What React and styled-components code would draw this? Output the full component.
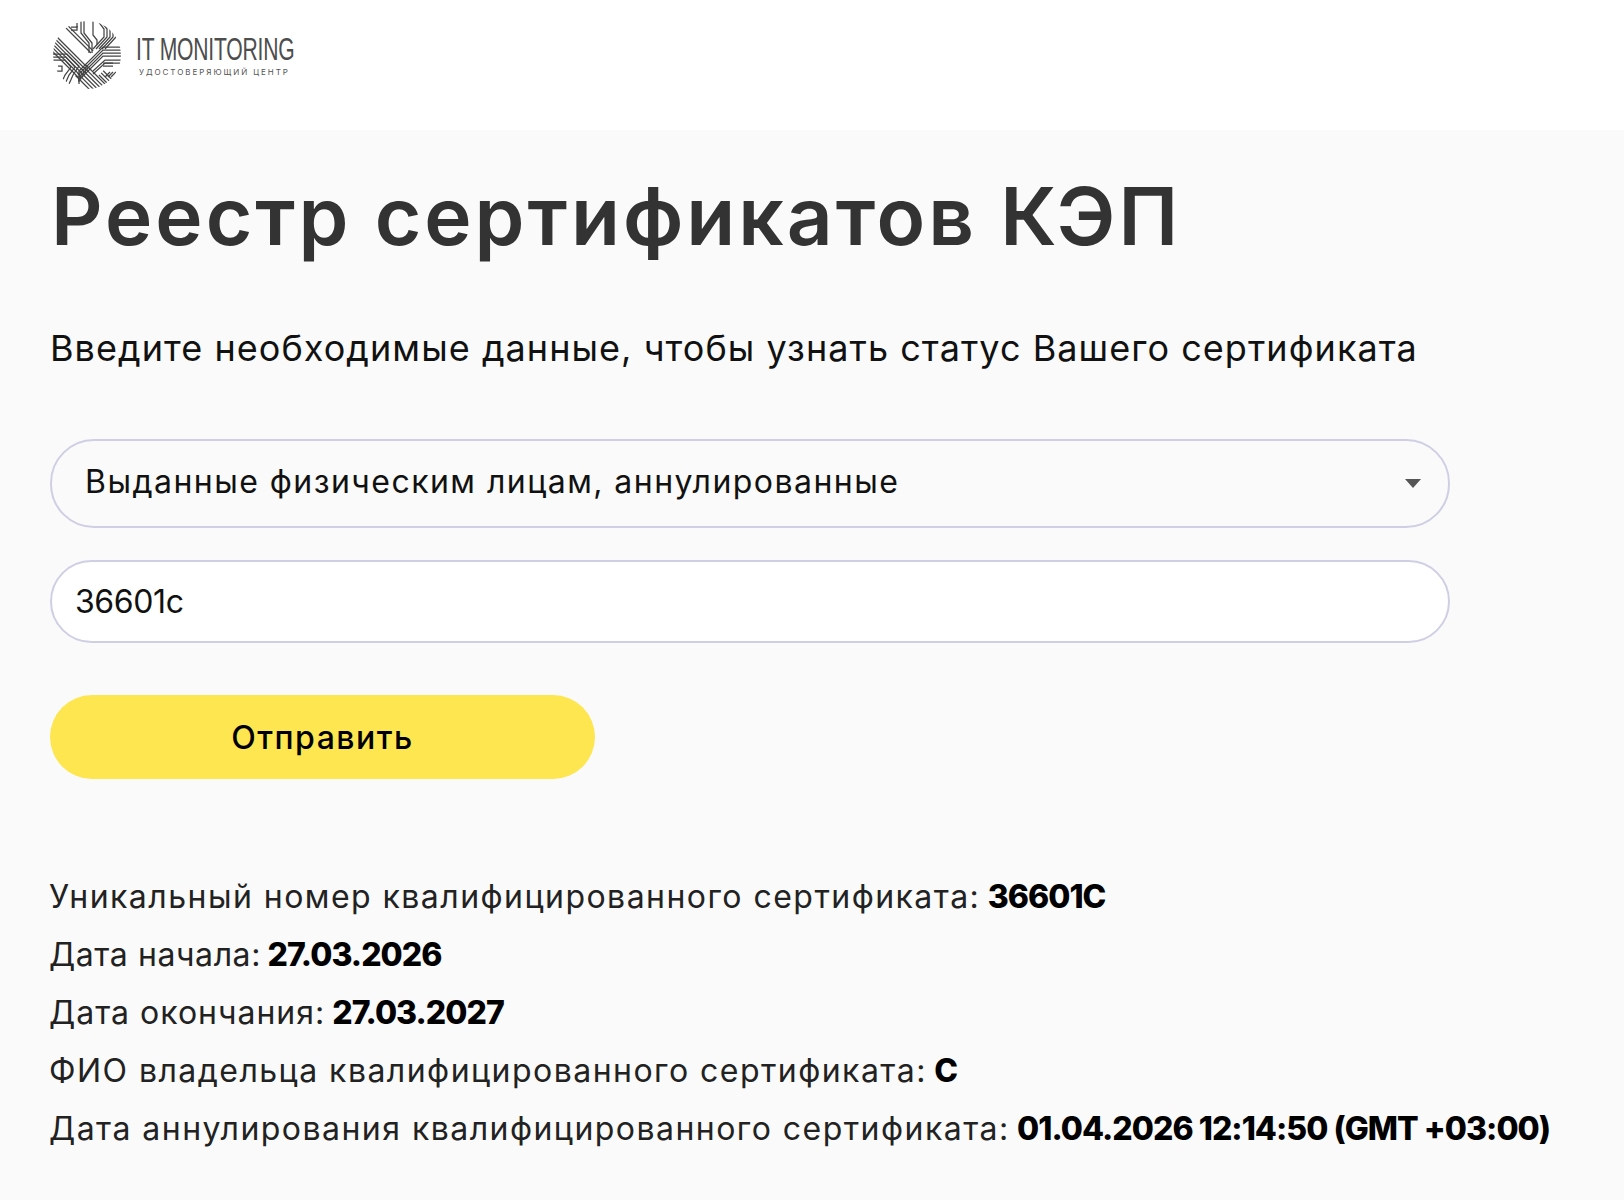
import React from "react";
import styled, { createGlobalStyle } from "styled-components";

const Global = createGlobalStyle`
  html, body { margin: 0; padding: 0; background: #fafafa; }
  body { font-family: Inter, "Noto Sans", sans-serif; color: #000; }
  * { box-sizing: border-box; }
`;
const Page = styled.div`min-height: 1200px; background: #fafafa;`;
const Header = styled.header`
  height: 130px; background: #fff; padding: 21px 0 0 53px;
  display: flex; align-items: flex-start; gap: 15px;
`;
const LogoText = styled.div`display: flex; flex-direction: column; padding-top: 11px;`;
const LogoName = styled.span`
  display: inline-block; transform: scaleX(0.66); transform-origin: left center;
  font-family: "Liberation Sans", sans-serif;
  font-size: 32px; line-height: 34px; color: #4d4d4d; white-space: nowrap;
  letter-spacing: -0.3px;
`;
const LogoSub = styled.span`
  font-family: Inter, sans-serif; font-size: 8px; line-height: 10px; color: #555;
  letter-spacing: 1.95px; margin: 1px 0 0 3px; white-space: nowrap;
`;
const Main = styled.main`padding: 0 0 0 50px;`;
const Title = styled.h1`
  margin: 40px 0 0 1px; font-size: 80px; line-height: 92px; font-weight: 600;
  color: #333; letter-spacing: 3px; white-space: nowrap;
`;
const Lead = styled.p`
  margin: 64px 0 0 0; font-size: 36px; line-height: 44px; color: #111;
  letter-spacing: 1.05px; white-space: nowrap;
`;
const Form = styled.form`width: 1400px; margin-top: 69px; display: flex; flex-direction: column;`;
const SelectBox = styled.div`
  height: 89px; border: 2px solid #cfcfe4; border-radius: 44px;
  display: flex; align-items: center; justify-content: space-between;
  padding: 0 27px 4px 33px; font-size: 32px; letter-spacing: 1.46px; color: #111;
`;
const Caret = styled.svg`width: 16px; height: 9px; display: block; margin-top: 4px;`;
const InputBox = styled.input`
  height: 83px; margin-top: 32px; border: 2px solid #cfcfe4; border-radius: 42px;
  background: #fff; padding: 0 23px; font: inherit; font-size: 32px; color: #111;
  outline: none; letter-spacing: -0.4px;
`;
const Submit = styled.button`
  width: 545px; height: 84px; margin-top: 52px; border: 0; border-radius: 42px;
  background: #fde64f; font: inherit; font-size: 32px; font-weight: 500; color: #000;
  letter-spacing: 1.5px;
`;
const Info = styled.div`margin: 89px 0 0 -1px; display: flex; flex-direction: column;`;
const Line = styled.div`
  font-size: 32px; line-height: 58px; color: #222; white-space: nowrap;
  letter-spacing: ${(p) => p.$spacing ?? 1.46}px;
`;
const Strong = styled.b`font-weight: 800; color: #000; letter-spacing: -0.95px; margin-left: -3px;`;

/* Each band: a polyline repeated n times, shifted by (dx, dy) per step. */
const bands = [
  { p: [[-4, 8], [34, 46], [34, 50]], d: [-1.6, 2.2], n: 6 },
  { p: [[2, -4], [38, 32]], d: [2.1, -2.1], n: 2 },
  { p: [[70, 26], [50, 26], [26, 50], [26, 54]], d: [0, 3], n: 4 },
  { p: [[70, 39], [52, 39], [40, 50]], d: [0, 3], n: 2 },
  { p: [[28, -2], [28, 12], [36, 22], [36, 32]], d: [3, 0], n: 2 },
  { p: [[40, -2], [40, 14], [44, 19], [44, 24]], d: [3, 0], n: 1 },
  { p: [[45, 0], [51, 8], [51, 16], [40, 28]], d: [3, 0], n: 5 },
  { p: [[33, 44], [60, 71]], d: [-2.1, 2.1], n: 6 },
  { p: [[46, 54], [64, 72]], d: [2.1, -2.1], n: 3 },
  { p: [[-2, 33], [14, 33], [26, 45], [20, 54], [12, 72]], d: [0, 3], n: 1 },
  { p: [[-2, 36], [13, 36], [22, 46], [16, 54], [8, 72]], d: [0, 0], n: 1 },
  { p: [[-2, 39], [12, 39], [18, 46], [12, 54], [4, 72]], d: [0, 0], n: 1 },
  { p: [[5, 45], [9, 45], [9, 50], [4, 50], [4, 54]], d: [0, 0], n: 1 },
  { p: [[18, 6], [24, 6], [24, 2]], d: [0, 3], n: 2 },
  { p: [[50, 42], [60, 42]], d: [0, 3], n: 2 },
  { p: [[52, 56], [57, 51]], d: [3, 0], n: 4 },
];

function Logo() {
  const lines = [];
  bands.forEach((b, i) => {
    for (let k = 0; k < b.n; k++) {
      const pts = b.p.map(([x, y]) => `${x + b.d[0] * k},${y + b.d[1] * k}`).join(" ");
      lines.push(<polyline key={`${i}-${k}`} points={pts} fill="none" stroke="#444" strokeWidth="1.25" />);
    }
  });
  return (
    <svg width="68" height="68" viewBox="0 0 68 68">
      <defs><clipPath id="lc"><circle cx="34" cy="34" r="34" /></clipPath></defs>
      <g clipPath="url(#lc)">{lines}</g>
    </svg>
  );
}

export default function App() {
  return (
    <Page>
      <Global />
      <Header>
        <Logo />
        <LogoText>
          <LogoName>IT MONITORING</LogoName>
          <LogoSub>УДОСТОВЕРЯЮЩИЙ ЦЕНТР</LogoSub>
        </LogoText>
      </Header>
      <Main>
        <Title>Реестр сертификатов КЭП</Title>
        <Lead>Введите необходимые данные, чтобы узнать статус Вашего сертификата</Lead>
        <Form>
          <SelectBox>
            <span>Выданные физическим лицам, аннулированные</span>
            <Caret viewBox="0 0 16 9"><path d="M0 0h16L8 9z" fill="#555" /></Caret>
          </SelectBox>
          <InputBox defaultValue="36601c" />
          <Submit type="button">Отправить</Submit>
        </Form>
        <Info>
          <Line>Уникальный номер квалифицированного сертификата: <Strong>36601C</Strong></Line>
          <Line $spacing={0.58}>Дата начала: <Strong>27.03.2026</Strong></Line>
          <Line $spacing={1}>Дата окончания: <Strong>27.03.2027</Strong></Line>
          <Line>ФИО владельца квалифицированного сертификата: <Strong>С</Strong></Line>
          <Line>Дата аннулирования квалифицированного сертификата: <Strong>01.04.2026 12:14:50 (GMT +03:00)</Strong></Line>
        </Info>
      </Main>
    </Page>
  );
}
